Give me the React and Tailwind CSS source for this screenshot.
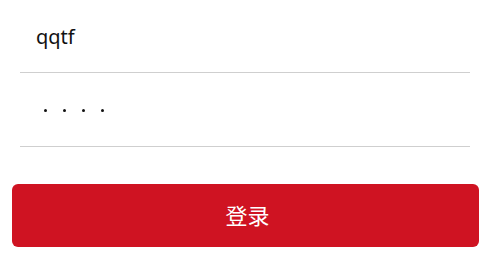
import React from 'react';

const LoginForm = () => {
  return (
    <div className="w-[495px] h-[280px] bg-white" style={{ fontFamily: '"Noto Sans", "Noto Sans CJK SC", sans-serif' }}>
      <div className="pl-5 pr-[25px]">
        <div className="h-[73px] border-b border-[#cfcfcf] flex items-center pl-4 pt-[2px]">
          <span className="text-[20px] text-[#111]">qqtf</span>
        </div>
        <div className="h-[74px] border-b border-[#cfcfcf] flex items-center pl-6 gap-[16px] pt-[2px]">
          {[0, 1, 2, 3].map((i) => (
            <span key={i} className="w-[3px] h-[3px] bg-[#111] rounded-full"></span>
          ))}
        </div>
      </div>
      <div className="px-3 mt-[37px] mr-[4px]">
        <button className="w-full h-[63px] rounded-[6px] bg-[#cf1322] text-white text-[22px] flex items-center justify-center pl-[4px]">
          登录
        </button>
      </div>
    </div>
  );
};

export default function App() {
  return <LoginForm />;
}
